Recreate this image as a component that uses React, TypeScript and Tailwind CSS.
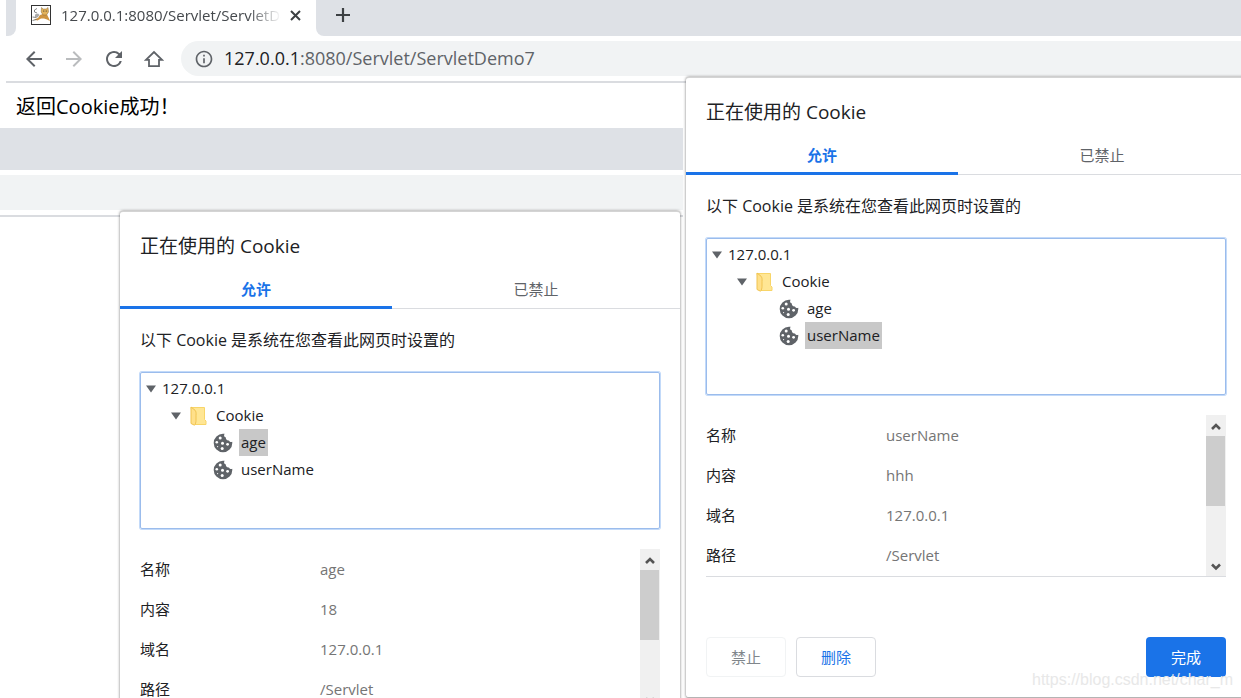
import { MdArrowBack, MdArrowForward, MdInfoOutline, MdRefresh } from "react-icons/md";

type Field = { label: string; value: string };

const leftFields: Field[] = [
  { label: "名称", value: "age" },
  { label: "内容", value: "18" },
  { label: "域名", value: "127.0.0.1" },
  { label: "路径", value: "/Servlet" },
];

const rightFields: Field[] = [
  { label: "名称", value: "userName" },
  { label: "内容", value: "hhh" },
  { label: "域名", value: "127.0.0.1" },
  { label: "路径", value: "/Servlet" },
];

function TomcatIcon() {
  return (
    <svg width="20" height="20" viewBox="0 0 20 20" className="shrink-0">
      <rect x="0.5" y="0.5" width="19" height="19" fill="#fff" stroke="#333" />
      <path d="M3 14.500l4-1.500 2-3 3-1 4 0.500 1.500 3 1.500 3.500-3-1.500-3-1-3 0-3.500 2z" fill="#cf9440" />
      <path d="M10.500 2.500l1.700 1.500h3L17 2.500l0.500 4.500-2 3h-3.500l-1.800-3z" fill="#e3b25a" stroke="#8a6a3a" strokeWidth="0.500" />
      <path d="M6 3.500l-2.500 1.500v2l2.500 1M1.500 12l4 0.500M1.500 15.500l4-1" fill="none" stroke="#666" strokeWidth="0.800" />
      <path d="M4 9.500l3-1 1.500 1.500-2 2.500-2.500-0.500z" fill="#aaa" />
      <circle cx="12.800" cy="6" r="0.600" fill="#222" />
      <circle cx="15.200" cy="6" r="0.600" fill="#222" />
    </svg>
  );
}

function CloseIcon() {
  return (
    <svg width="17" height="17" viewBox="0 0 17 17" stroke="#3c4043" strokeWidth="2">
      <path d="M4 4l9 9M13 4l-9 9" />
    </svg>
  );
}

function PlusIcon() {
  return (
    <svg width="22" height="22" viewBox="0 0 22 22" stroke="#3c4043" strokeWidth="2.200">
      <path d="M11 4v14M4 11h14" />
    </svg>
  );
}

function HomeIcon() {
  return (
    <svg width="20" height="20" viewBox="0 0 20 20" fill="none" stroke="#5f6368" strokeWidth="1.800">
      <path d="M2 10.800h3v6.300h10v-6.300h3L10 3z" />
    </svg>
  );
}

function Triangle() {
  return (
    <svg width="10" height="8" viewBox="0 0 10 8" className="shrink-0">
      <path d="M0 0.500h10L5 7.500z" fill="#5f6368" />
    </svg>
  );
}

function FolderIcon() {
  return (
    <svg width="17" height="20" viewBox="0 0 17 20" className="shrink-0">
      <path d="M1 1.500h13.500v12l1.500 1.500v3.500H5z" fill="#ffe694" stroke="#f8d568" />
      <path d="M1 1l4 3.200c1 1 1.300 3 1 5v5c0 2-0.500 4-1.500 5L1 17.500z" fill="#ffe08a" stroke="#f0c350" />
    </svg>
  );
}

function CookieIcon() {
  return (
    <svg width="20" height="20" viewBox="0 0 20 20" className="shrink-0">
      <path
        d="M10 0.700a9.300 9.300 0 1 0 9.300 9.300c0-.5 0-.9-.1-1.300-1.300.7-2.700.2-3.200-1.200-2 .3-3.400-1-3.100-2.900C11.100 4 10.500 2.300 11.600.8z"
        fill="#5f6368"
      />
      <g fill="#fff">
        <circle cx="7.200" cy="4.900" r="1.500" />
        <circle cx="3.800" cy="9.200" r="1.300" />
        <circle cx="9.500" cy="10.200" r="1.500" />
        <circle cx="14.600" cy="11.300" r="1.400" />
        <circle cx="9.200" cy="15.600" r="1.500" />
        <circle cx="4.600" cy="13.600" r="0.600" />
      </g>
    </svg>
  );
}

function TreeLeaf({ name, selected }: { name: string; selected: boolean }) {
  return (
    <li role="treeitem" aria-selected={selected} className="flex h-[27px] items-center pl-[72px]">
      <CookieIcon />
      <span className={`ml-[6px] px-[2px] leading-[27px] ${selected ? "bg-[#c8c8c8]" : ""}`}>{name}</span>
    </li>
  );
}

function Scrollbar() {
  return (
    <div className="flex w-5 shrink-0 flex-col bg-[#f0f0f0]">
      <div className="flex h-[21px] items-center justify-center">
        <svg width="10" height="8" viewBox="0 0 10 8">
          <path d="M1 7l4-4 4 4" fill="none" stroke="#555" strokeWidth="2.600" />
        </svg>
      </div>
      <div className="mr-px h-[70px] bg-[#cdcdcd]" />
      <div className="mt-auto flex h-[18px] items-center justify-center">
        <svg width="10" height="8" viewBox="0 0 10 8">
          <path d="M1 1.500l4 4 4-4" fill="none" stroke="#555" strokeWidth="2.600" />
        </svg>
      </div>
    </div>
  );
}

function CookieDialog({ selected, fields }: { selected: string; fields: Field[] }) {
  return (
    <div
      role="dialog"
      aria-label="正在使用的 Cookie"
      className="flex w-[560px] flex-col rounded-[3px] border-y border-t-[#d4d4d4] border-b-[#b4b4b4] bg-white pb-5 text-[15px] text-[#202124] shadow-[0_0_3px_rgba(0,0,0,0.55)]"
    >
      <h2 className="px-5 pt-5 text-[19px] leading-7">正在使用的 Cookie</h2>
      <div role="tablist" className="mt-2 flex h-[41px] border-b border-[#dadce0]">
        <button role="tab" aria-selected="true" className="-mb-px w-[272px] border-b-[3px] border-[#1a73e8] pt-1 font-bold text-[#1a73e8]">
          允许
        </button>
        <button role="tab" aria-selected="false" className="flex-1 pt-[2px] text-[#5f6368]">
          已禁止
        </button>
      </div>
      <div className="flex flex-col px-5 pt-[19px]">
        <p className="text-base leading-6">以下 Cookie 是系统在您查看此网页时设置的</p>
        <ul role="tree" className="mt-5 h-[157px] rounded-[2px] border border-[#9bbcec] pt-[2px] ring-1 ring-[#c3daf9]">
          <li role="treeitem" aria-expanded="true" className="flex h-[27px] items-center gap-[6px] pl-[5px]">
            <Triangle />
            127.0.0.1
          </li>
          <li role="treeitem" aria-expanded="true" className="flex h-[27px] items-center pl-[30px]">
            <Triangle />
            <span className="ml-[9px] mr-[9px]">
              <FolderIcon />
            </span>
            Cookie
          </li>
          <TreeLeaf name="age" selected={selected === "age"} />
          <TreeLeaf name="userName" selected={selected === "userName"} />
        </ul>
        <div className="mt-5 flex h-[162px] overflow-hidden border-b border-[#dadce0]">
          <div className="flex-1">
            <table className="w-full text-left">
              <tbody>
                {fields.map((f) => (
                  <tr key={f.label} className="h-10">
                    <th scope="row" className="w-[180px] font-normal">{f.label}</th>
                    <td className="text-[#757575]">{f.value}</td>
                  </tr>
                ))}
              </tbody>
            </table>
          </div>
          <Scrollbar />
        </div>
        <div className="mt-[60px] flex gap-[10px]">
          <button disabled className="h-10 w-20 rounded border border-[#f1f3f4] text-[#80868b]">禁止</button>
          <button className="h-10 w-20 rounded border border-[#dadce0] text-[#1a73e8]">删除</button>
          <button className="ml-auto h-10 w-20 rounded bg-[#1a73e8] text-white">完成</button>
        </div>
      </div>
    </div>
  );
}

function App() {
  return (
    <div className="relative h-screen overflow-hidden bg-white font-['Open_Sans','Noto_Sans_CJK_SC',sans-serif]">
      {/* Tab strip */}
      <div className="ml-[6px] flex h-9">
        <div className="w-[10px] rounded-br-lg bg-[#dee1e6]" />
        <div className="flex w-[300px] items-center pb-[6px] pl-[15px]">
          <TomcatIcon />
          <span className="ml-[10px] w-[220px] overflow-hidden whitespace-nowrap text-[15px] text-[#45494d] [mask-image:linear-gradient(to_right,black_85%,transparent)]">
            127.0.0.1:8080/Servlet/ServletDemo7
          </span>
          <button aria-label="关闭" className="ml-[6px]">
            <CloseIcon />
          </button>
        </div>
        <div className="flex flex-1 items-center rounded-bl-lg bg-[#dee1e6] pb-[6px] pl-4">
          <button aria-label="新标签页">
            <PlusIcon />
          </button>
        </div>
      </div>

      {/* Toolbar */}
      <div className="ml-[6px] flex items-center border-b-2 border-[#dadce0] py-[5px] pl-2 text-[#5f6368]">
        <button aria-label="后退" className="flex w-10 justify-center"><MdArrowBack size={24} /></button>
        <button aria-label="前进" className="flex w-10 justify-center text-[#babcbe]"><MdArrowForward size={24} /></button>
        <button aria-label="重新加载" className="flex w-10 justify-center"><MdRefresh size={24} /></button>
        <button aria-label="主页" className="flex w-10 justify-center"><HomeIcon /></button>
        <div className="ml-[7px] flex h-[35px] flex-1 items-center gap-[10px] rounded-l-full bg-[#f1f3f4] pl-[13px] text-lg">
          <MdInfoOutline size={20} />
          <span className="pb-[2px]">
            <span className="text-[#202124]">127.0.0.1</span>:8080/Servlet/ServletDemo7
          </span>
        </div>
      </div>

      <p className="h-[45px] px-4 pt-2 text-xl leading-8 text-black">返回Cookie成功！</p>

      {/* Second browser window, behind the dialogs */}
      <div className="w-[55%]">
        <div className="h-[42px] bg-[#dee1e6]" />
        <div className="border-b-2 border-[#dadce0] py-[5px]">
          <div className="h-[35px] bg-[#f1f3f4]" />
        </div>
      </div>

      <div className="absolute left-[120px] top-[211px]">
        <CookieDialog selected="age" fields={leftFields} />
      </div>
      <div className="absolute -right-[5px] top-[77px]">
        <CookieDialog selected="userName" fields={rightFields} />
      </div>

      <span className="absolute bottom-[6px] right-2 font-['Liberation_Sans',sans-serif] text-base text-[#e8e8e8]">
        https://blog.csdn.net/char_m
      </span>
    </div>
  );
}

export default App;
